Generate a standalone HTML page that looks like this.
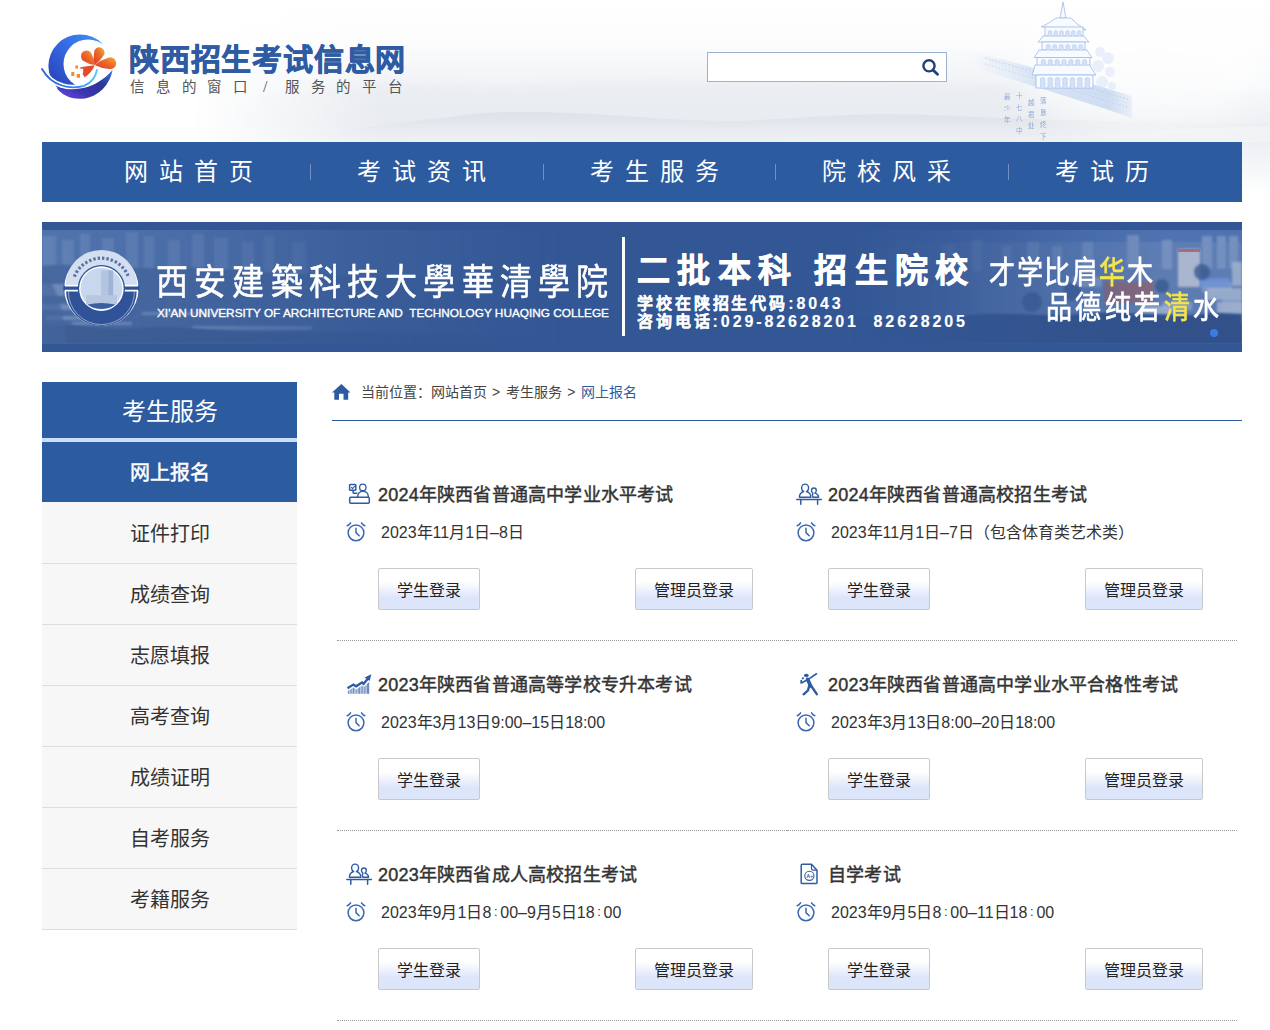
<!DOCTYPE html>
<html lang="zh-CN">
<head>
<meta charset="utf-8">
<title>陕西招生考试信息网</title>
<style>
*{margin:0;padding:0;box-sizing:border-box;}
html,body{width:1270px;height:1030px;overflow:hidden;background:#fff;}
body{font-family:"Liberation Sans",sans-serif;color:#333;position:relative;}
.abs{position:absolute;}
#header{position:absolute;left:0;top:0;width:1270px;height:142px;overflow:hidden;}
#nav{position:absolute;left:42px;top:142px;width:1200px;height:60px;background:#2d5b9f;}
#nav span{position:absolute;top:0;height:60px;line-height:60px;color:#fff;font-size:24px;letter-spacing:11px;white-space:nowrap;}
#nav i{position:absolute;top:22px;width:1px;height:16px;background:rgba(255,255,255,.33);}
#banner{position:absolute;left:42px;top:222px;width:1200px;height:130px;background:#335795;overflow:hidden;}
#side{position:absolute;left:42px;top:382px;width:255px;}
#side .hd{height:56px;background:#2d5b9f;color:#fff;font-size:24px;text-align:center;line-height:59px;}
#side .ln{height:4px;background:#c9def8;}
#side .it{height:61px;background:#f7f7f7;border-bottom:1px solid #dedede;text-align:center;line-height:62px;font-size:20px;color:#333;}
#side .it.on{height:61px;background:#2d5b9f;color:#fff;border-bottom:1px solid #f7f7f7;-webkit-text-stroke:0.5px #fff;line-height:62px;}
#crumb{position:absolute;left:332px;top:382px;width:910px;height:39px;border-bottom:1px solid #2d5b9f;}
#crumb .t{position:absolute;left:29px;top:0;font-size:14px;line-height:20px;color:#444;white-space:nowrap;}
.card{position:absolute;width:450px;height:191px;border-bottom:1px dotted #999;}
.card svg.ic,.card svg.ck{position:absolute;left:0;top:0;width:60px;height:100px;overflow:visible;}
.card .tt{position:absolute;left:41px;top:32px;font-size:18px;-webkit-text-stroke:0.45px #333;letter-spacing:0.2px;color:#333;white-space:nowrap;line-height:26px;}
.card .dt{position:absolute;left:44px;top:71px;font-size:16px;color:#333;white-space:nowrap;line-height:24px;}
.btn{position:absolute;top:118px;height:42px;border:1px solid #c9c9c9;border-radius:2px;background:linear-gradient(#fff 0%,#fff 32%,#dde5fa 72%,#dde5fa 100%);font-size:16px;color:#222;line-height:40px;padding-top:2px;text-align:center;white-space:nowrap;}
.b1{left:41px;width:102px;}
.b2{left:298px;width:118px;}
</style>
</head>
<body>
<div id="header">
<svg width="1270" height="142" style="position:absolute;left:0;top:0">
  <defs>
    <linearGradient id="hv" x1="0" y1="0" x2="0" y2="142" gradientUnits="userSpaceOnUse">
      <stop offset="0" stop-color="#ffffff"/>
      <stop offset="0.3" stop-color="#fcfcfd"/>
      <stop offset="0.55" stop-color="#f2f4f7"/>
      <stop offset="0.72" stop-color="#eef1f4"/>
      <stop offset="0.86" stop-color="#ebeef2"/>
      <stop offset="1" stop-color="#f1f3f5"/>
    </linearGradient>
    <linearGradient id="hm" x1="0" y1="0" x2="1270" y2="0" gradientUnits="userSpaceOnUse">
      <stop offset="0" stop-color="#000"/>
      <stop offset="0.15" stop-color="#000"/>
      <stop offset="0.3" stop-color="#fff"/>
      <stop offset="0.9" stop-color="#fff"/>
      <stop offset="1" stop-color="#ccc"/>
    </linearGradient>
    <mask id="hmask"><rect width="1270" height="142" fill="url(#hm)"/></mask>
    <filter id="bl3" x="-10%" y="-50%" width="120%" height="200%"><feGaussianBlur stdDeviation="3"/></filter>
    <filter id="bl1"><feGaussianBlur stdDeviation="0.6"/></filter>
    <linearGradient id="wallg" x1="975" y1="0" x2="1132" y2="0" gradientUnits="userSpaceOnUse"><stop offset="0" stop-color="#e4ecf8" stop-opacity="0.2"/><stop offset="0.4" stop-color="#c8d8f1"/><stop offset="0.85" stop-color="#bcd0ef"/><stop offset="1" stop-color="#bcd0ef" stop-opacity="0.3"/></linearGradient>
    <filter id="glow" x="-50%" y="-50%" width="200%" height="200%"><feGaussianBlur stdDeviation="18"/></filter>
    <filter id="bl05"><feGaussianBlur stdDeviation="0.35"/></filter>
    <linearGradient id="mt" x1="0" y1="0" x2="0" y2="1">
      <stop offset="0" stop-color="#dde2e9"/>
      <stop offset="0.5" stop-color="#e6e9ee"/>
      <stop offset="1" stop-color="#eef1f4" stop-opacity="0.3"/>
    </linearGradient>
  </defs>
  <g mask="url(#hmask)">
    <rect width="1270" height="142" fill="url(#hv)"/>
    <path d="M200 96 C280 88 380 80 460 84 C540 88 600 78 680 80 C760 82 800 74 880 80 C960 86 1060 80 1140 86 C1200 90 1240 88 1270 90 V142 H200 Z" fill="#e6e9ee" opacity="0.45" filter="url(#bl3)"/>
    <path d="M340 130 C380 126 420 120 450 117 C470 114 490 112 520 112 C560 112 600 114 640 117 C680 120 700 121 740 121 C780 119 810 117 850 115 C900 113 950 116 1000 118 C1060 120 1120 121 1180 123 C1220 124 1250 124 1270 123 V142 H340 Z" fill="url(#mt)" opacity="0.95" filter="url(#bl1)"/>
    <path d="M200 142 C300 140 380 138 430 136 C470 134 520 136 560 138 C640 140 700 140 780 137 C840 135 900 136 960 137 C1040 139 1150 130 1270 126 V142 Z" fill="#eef0f3" opacity="0.85" filter="url(#bl1)"/>
  </g>
  <!-- pagoda -->
  <ellipse cx="1150" cy="70" rx="130" ry="60" fill="#fff" opacity="0.75" filter="url(#glow)"/>
  <g filter="url(#bl05)">
    <path d="M975 52 C1020 64 1080 80 1132 96 L1132 118 C1080 100 1020 82 975 68 Z" fill="url(#wallg)" opacity="0.7"/>
    <path d="M985 58 C1030 70 1085 86 1130 100" stroke="#b2c7ea" stroke-width="1.2" fill="none" opacity="0.55" stroke-dasharray="2 1.5"/>
    <path d="M985 64 C1030 77 1085 94 1130 108" stroke="#b2c7ea" stroke-width="1.2" fill="none" opacity="0.5" stroke-dasharray="1.5 2"/>
    <path d="M990 61 C1035 74 1085 90 1130 104" stroke="#c4d4ef" stroke-width="2.5" fill="none" opacity="0.4" stroke-dasharray="1 1.5"/>
    <g fill="#dbe6f7" opacity="0.55">
      <circle cx="1100" cy="52" r="5"/><circle cx="1108" cy="58" r="6"/><circle cx="1098" cy="66" r="6"/><circle cx="1110" cy="72" r="5"/><circle cx="1102" cy="82" r="6"/><circle cx="1112" cy="86" r="4"/>
    </g>
    <g fill="#f7faff" stroke="#9dbbe8" stroke-width="0.8">
      <path d="M1063 2 L1066 18 L1060 18 Z"/>
      <path d="M1056 18 H1071 Q1076 24 1086 30 Q1064 27 1041 27 Q1050 23 1056 18 Z"/>
      <rect x="1045" y="27" width="38" height="9"/>
      <path d="M1043 36 H1084 Q1086 39 1089 42 H1038 Q1041 39 1043 36 Z"/>
      <rect x="1042" y="42" width="43" height="8"/>
      <path d="M1039 50 H1087 Q1089 54 1092 57.5 H1034 Q1037 54 1039 50 Z"/>
      <rect x="1037" y="57.5" width="53" height="8.5"/>
      <path d="M1035 65 H1090 Q1092 70 1096 75 H1032 Q1034 70 1035 65 Z"/>
      <rect x="1036" y="75" width="57" height="13"/>
    </g>
    <g fill="#d3e0f5" stroke="#b9cdef" stroke-width="0.6"><path d="M1048.2 36 V31.5 Q1049.9 29.5 1051.7 31.5 V36" /><path d="M1054.0 36 V31.5 Q1055.8 29.5 1057.5 31.5 V36" /><path d="M1059.8 36 V31.5 Q1061.6 29.5 1063.3 31.5 V36" /><path d="M1065.7 36 V31.5 Q1067.4 29.5 1069.2 31.5 V36" /><path d="M1071.5 36 V31.5 Q1073.2 29.5 1075.0 31.5 V36" /><path d="M1077.3 36 V31.5 Q1079.1 29.5 1080.8 31.5 V36" /><path d="M1046.3 50 V45.5 Q1048.2 43.5 1050.2 45.5 V50" /><path d="M1052.8 50 V45.5 Q1054.8 43.5 1056.7 45.5 V50" /><path d="M1059.3 50 V45.5 Q1061.2 43.5 1063.2 45.5 V50" /><path d="M1065.8 50 V45.5 Q1067.8 43.5 1069.7 45.5 V50" /><path d="M1072.3 50 V45.5 Q1074.2 43.5 1076.2 45.5 V50" /><path d="M1078.8 50 V45.5 Q1080.8 43.5 1082.7 45.5 V50" /><path d="M1041.4 66 V60.5 Q1043.4 58.5 1045.5 60.5 V66" /><path d="M1048.2 66 V60.5 Q1050.3 58.5 1052.3 60.5 V66" /><path d="M1055.1 66 V60.5 Q1057.1 58.5 1059.2 60.5 V66" /><path d="M1061.9 66 V60.5 Q1064.0 58.5 1066.1 60.5 V66" /><path d="M1068.8 66 V60.5 Q1070.9 58.5 1072.9 60.5 V66" /><path d="M1075.7 66 V60.5 Q1077.7 58.5 1079.8 60.5 V66" /><path d="M1082.5 66 V60.5 Q1084.6 58.5 1086.6 60.5 V66" /><path d="M1040.5 88 V78.5 Q1042.7 76.5 1044.9 78.5 V88" /><path d="M1047.9 88 V78.5 Q1050.1 76.5 1052.4 78.5 V88" /><path d="M1055.3 88 V78.5 Q1057.6 76.5 1059.8 78.5 V88" /><path d="M1062.8 88 V78.5 Q1065.0 76.5 1067.2 78.5 V88" /><path d="M1070.2 88 V78.5 Q1072.4 76.5 1074.7 78.5 V88" /><path d="M1077.6 88 V78.5 Q1079.9 76.5 1082.1 78.5 V88" /><path d="M1085.1 88 V78.5 Q1087.3 76.5 1089.5 78.5 V88" /></g>
  </g>
  <g fill="#7d9dd3" font-size="6.5" font-family="Liberation Serif" opacity="0.85"><text x="1004" y="99">最</text><text x="1004" y="110.5">少</text><text x="1004" y="122">年</text><text x="1016" y="98">十</text><text x="1016" y="109.5">七</text><text x="1016" y="121">八</text><text x="1016" y="132.5">中</text><text x="1028" y="105">越</text><text x="1028" y="116.5">君</text><text x="1028" y="128">处</text><text x="1040" y="103">落</text><text x="1040" y="115">恳</text><text x="1040" y="127">终</text><text x="1040" y="139">下</text></g>
  <!-- logo -->
  <defs>
    <linearGradient id="lg1" x1="0" y1="1" x2="1" y2="0">
      <stop offset="0" stop-color="#2536a8"/>
      <stop offset="0.5" stop-color="#3466e0"/>
      <stop offset="1" stop-color="#3f9cf7"/>
    </linearGradient>
    <linearGradient id="lg2" x1="0" y1="1" x2="1" y2="0">
      <stop offset="0" stop-color="#7a45ee"/>
      <stop offset="0.35" stop-color="#3a36b0"/>
      <stop offset="0.65" stop-color="#2a3594"/>
      <stop offset="1" stop-color="#3d78e8"/>
    </linearGradient>
    <linearGradient id="lg4" x1="0" y1="0" x2="1" y2="0">
      <stop offset="0" stop-color="#2d63d8"/>
      <stop offset="0.6" stop-color="#3585ee"/>
      <stop offset="1" stop-color="#5cc6f8"/>
    </linearGradient>
    <linearGradient id="lg3" x1="0" y1="1" x2="1" y2="0">
      <stop offset="0" stop-color="#e33524"/>
      <stop offset="0.55" stop-color="#ea6a2c"/>
      <stop offset="1" stop-color="#f2b13c"/>
    </linearGradient>
    <mask id="cres"><rect x="0" y="0" width="200" height="142" fill="#fff"/><circle cx="88" cy="64" r="24.5" fill="#000"/></mask>
  </defs>
  <circle cx="80" cy="66" r="31.6" fill="url(#lg1)" mask="url(#cres)"/>
  <path d="M42 69 C46 76 53 83 62 85.5 C68 87.5 76 88 84 85.8 C91 83 95.5 77.5 97 70" fill="none" stroke="#fff" stroke-width="5"/>
  <path d="M42 69 C46 76 53 83 62 85.5 C68 87.5 76 88 84 85.8 C91 83 95.5 77.5 97 70" fill="none" stroke="url(#lg4)" stroke-width="1.8" stroke-linecap="round"/>
  <path d="M56.5 88 C64 90.5 72 89.5 80 88.6 C92 87 104 80 112.6 70 C110 84 99 97.5 82 98.8 C70 99.5 61 94 56.5 88 Z" fill="url(#lg2)"/>
  <g fill="url(#lg3)">
    <path d="M94.6 65.0 Q94.7 59.6 92.0 54.8 A5.6 5.6 0 1 0 84.7 61.5 Q89.2 64.6 94.6 65.0 Z"/>
    <path d="M94.6 65.0 Q99.8 61.6 103.1 56.3 A5.3 5.3 0 1 0 94.0 52.9 Q93.0 59.0 94.6 65.0 Z"/>
    <path d="M94.6 65.0 Q101.3 68.4 108.7 68.9 A5.9 5.9 0 1 0 107.5 58.0 Q100.3 60.2 94.6 65.0 Z"/>
    <path d="M94.6 65.2 C90 65.8 84 66.5 80 67.5 L81.5 72 L84.6 77.2 C89 74.5 93 70 94.6 65.2 Z" fill="#e54a2c"/>
  </g>
  <g fill="#ef8a2e">
    <rect x="75.4" y="65.4" width="2.6" height="3.2"/>
    <rect x="79" y="68.7" width="4.2" height="4.6" fill="#fff"/>
    <rect x="71.3" y="72" width="3" height="4"/>
    <rect x="76.7" y="74" width="3.3" height="3.8"/>
  </g>
</svg>
  <div class="abs" style="left:129px;top:42px;font-size:30px;font-weight:bold;color:#2e5ba2;white-space:nowrap;line-height:36px;letter-spacing:0.8px;-webkit-text-stroke:0.7px #2e5ba2;">陕西招生考试信息网</div>
  <div class="abs" style="left:130px;top:77px;font-size:14.5px;color:#555;white-space:nowrap;line-height:20px;font-family:'Liberation Serif',serif;"><span style="display:inline-block;width:25.8px">信</span><span style="display:inline-block;width:25.8px">息</span><span style="display:inline-block;width:25.8px">的</span><span style="display:inline-block;width:25.8px">窗</span><span style="display:inline-block;width:25.8px">口</span><span style="display:inline-block;width:25.8px;padding-left:4px;font-size:16px">/</span><span style="display:inline-block;width:25.8px">服</span><span style="display:inline-block;width:25.8px">务</span><span style="display:inline-block;width:25.8px">的</span><span style="display:inline-block;width:25.8px">平</span><span style="display:inline-block;width:25.8px">台</span></div>
  <div class="abs" style="left:707px;top:52px;width:240px;height:30px;border:1px solid #9bb0d3;background:#fff;"></div>
  <svg class="abs" style="left:918px;top:56px" width="22" height="22" viewBox="0 0 22 22"><circle cx="11" cy="9.8" r="5.6" fill="none" stroke="#1f3f7c" stroke-width="2.4"/><path d="M15 14 L19.5 18.3" stroke="#1f3f7c" stroke-width="2.8" stroke-linecap="round"/></svg>
</div>

<div class="abs" style="left:1242px;top:142px;width:28px;height:54px;background:linear-gradient(#edf0f3,#f4f6f8 45%,#fff)"></div>
<div id="nav">
  <span style="left:82px">网站首页</span><i style="left:268px"></i>
  <span style="left:315px">考试资讯</span><i style="left:501px"></i>
  <span style="left:548px">考生服务</span><i style="left:733px"></i>
  <span style="left:780px">院校风采</span><i style="left:966px"></i>
  <span style="left:1013px">考试历</span>
</div>

<div id="banner">
<svg width="1200" height="130" style="position:absolute;left:0;top:0">
  <defs>
    <linearGradient id="bl" x1="0" y1="0" x2="1" y2="0">
      <stop offset="0" stop-color="#6d8fc0" stop-opacity="0.75"/>
      <stop offset="0.45" stop-color="#5a7db5" stop-opacity="0.45"/>
      <stop offset="1" stop-color="#335795" stop-opacity="0"/>
    </linearGradient>
    <linearGradient id="br" x1="0" y1="0" x2="1" y2="0">
      <stop offset="0" stop-color="#335795" stop-opacity="0"/>
      <stop offset="0.45" stop-color="#4a6aa5" stop-opacity="0.5"/>
      <stop offset="1" stop-color="#5678b0" stop-opacity="0.9"/>
    </linearGradient>
    <linearGradient id="brv" x1="0" y1="0" x2="0" y2="1">
      <stop offset="0" stop-color="#7d9ccc"/>
      <stop offset="0.35" stop-color="#8aa5cf"/>
      <stop offset="0.6" stop-color="#52709f"/>
      <stop offset="1" stop-color="#2b4d80"/>
    </linearGradient>
    <mask id="mr"><rect x="800" y="8" width="400" height="114" fill="url(#mrg)"/></mask>
    <linearGradient id="mrg" x1="800" y1="0" x2="1200" y2="0" gradientUnits="userSpaceOnUse">
      <stop offset="0" stop-color="#000"/>
      <stop offset="0.25" stop-color="#333"/>
      <stop offset="0.6" stop-color="#bbb"/>
      <stop offset="0.8" stop-color="#fff"/>
      <stop offset="1" stop-color="#fff"/>
    </linearGradient>
    <mask id="ml"><rect x="0" y="8" width="520" height="114" fill="url(#mlg)"/></mask>
    <linearGradient id="mlg" x1="0" y1="0" x2="520" y2="0" gradientUnits="userSpaceOnUse">
      <stop offset="0" stop-color="#d0d0d0"/>
      <stop offset="0.3" stop-color="#9a9a9a"/>
      <stop offset="0.6" stop-color="#444"/>
      <stop offset="1" stop-color="#000"/>
    </linearGradient>
    <filter id="bb"><feGaussianBlur stdDeviation="1.2"/></filter>
  </defs>
  <rect width="1200" height="130" fill="#335795"/>
  <!-- left photo -->
  <g mask="url(#ml)">
    <rect x="0" y="8" width="520" height="114" fill="#587ab2"/>
    <g fill="#6c8bbd" filter="url(#bb)">
      <rect x="0" y="14" width="14" height="40"/><rect x="20" y="18" width="12" height="36"/><rect x="38" y="12" width="10" height="42"/>
      <rect x="60" y="16" width="12" height="40"/><rect x="84" y="10" width="12" height="44"/><rect x="102" y="14" width="10" height="40"/>
      <rect x="126" y="18" width="12" height="36"/><rect x="150" y="12" width="12" height="44"/><rect x="172" y="16" width="14" height="40"/>
      <rect x="200" y="20" width="12" height="34"/><rect x="222" y="14" width="10" height="40"/><rect x="250" y="20" width="14" height="36"/>
    </g>
    <path d="M0 44 C40 40 80 48 120 46 C160 44 200 50 260 52 C320 54 380 58 520 60 V122 H0 Z" fill="#4d6da3" filter="url(#bb)"/>
    <g fill="#8ea6cc" opacity="0.75" filter="url(#bb)">
      <rect x="0" y="62" width="22" height="12"/><rect x="0" y="82" width="30" height="6"/><rect x="4" y="94" width="40" height="4"/>
      <rect x="30" y="100" width="60" height="3"/><rect x="100" y="90" width="90" height="3"/><rect x="150" y="104" width="120" height="4"/>
    </g>
    <path d="M0 104 C30 100 60 110 100 106 C140 102 180 112 240 110 C300 108 380 114 520 112 V122 H0 Z" fill="#3f5e93" filter="url(#bb)"/>
    <path d="M0 48 C10 60 20 72 24 122 H0 Z" fill="#4a6aa0" opacity="0.7" filter="url(#bb)"/>
  </g>
  <!-- right photo -->
  <g mask="url(#mr)">
    <rect x="800" y="8" width="400" height="114" fill="#4f73b0"/>
    <rect x="800" y="20" width="400" height="34" fill="#5f7db5" filter="url(#bb)"/>
    <g fill="#7590bf" filter="url(#bb)">
      <rect x="900" y="22" width="12" height="30"/><rect x="930" y="18" width="10" height="34"/>
      <rect x="960" y="24" width="9" height="28"/><rect x="985" y="20" width="12" height="34"/>
      <rect x="1010" y="24" width="10" height="30"/><rect x="1040" y="20" width="11" height="34"/>
      <rect x="1085" y="13" width="12" height="40"/><rect x="1120" y="18" width="10" height="30"/>
      <rect x="1160" y="14" width="10" height="46"/><rect x="1175" y="14" width="9" height="46"/>
      <rect x="1187" y="14" width="9" height="46"/>
    </g>
    <path d="M800 52 C860 46 920 52 980 48 C1040 44 1100 50 1200 46 V96 H800 Z" fill="#5d7bb2" filter="url(#bb)"/>
    <g fill="#8aa0c8" opacity="0.8" filter="url(#bb)">
      <rect x="1030" y="55" width="30" height="10"/><rect x="1160" y="60" width="30" height="10"/>
      <rect x="1180" y="76" width="20" height="26"/><rect x="1120" y="80" width="30" height="8"/>
    </g>
    <rect x="1136" y="27" width="22" height="38" fill="#aab6cf" filter="url(#bb)"/>
    <rect x="1136" y="27" width="22" height="3" fill="#a66a78"/>
    <rect x="1062" y="60" width="50" height="21" fill="#86697c" filter="url(#bb)"/>
    <rect x="1158" y="56" width="30" height="10" fill="#6e93d6" opacity="0.8" filter="url(#bb)"/>
    <g fill="#9fb1d0" opacity="0.85" filter="url(#bb)">
      <rect x="1165" y="66" width="35" height="12"/><rect x="1175" y="80" width="25" height="22"/><rect x="1100" y="84" width="30" height="8"/>
      <rect x="1190" y="40" width="10" height="24"/>
    </g>
    <g fill="#3a5a90" opacity="0.8" filter="url(#bb)">
      <circle cx="1160" cy="50" r="8"/><circle cx="1120" cy="64" r="7"/><circle cx="1030" cy="70" r="9"/><circle cx="990" cy="80" r="10"/>
    </g>
    <path d="M800 98 C840 92 880 100 920 94 C960 88 1000 96 1040 92 C1080 88 1120 96 1160 92 C1180 90 1190 92 1200 92 V122 H800 Z" fill="#30518a" filter="url(#bb)"/>
  </g>
  <rect x="0" y="0" width="1200" height="8" fill="#335795"/>
  <rect x="0" y="122" width="1200" height="8" fill="#335795"/>
  <!-- school logo -->
  <g transform="translate(59.4,66.6)">
    <circle r="37.2" fill="#ffffff"/>
    <path d="M-35.7 -3 A35.7 35.7 0 0 1 35.7 -3 Z" fill="#d3deef"/>
    <path d="M-35.4 2 A35.4 35.4 0 0 0 35.4 2 Z" fill="#2f5299"/>
    <rect x="-38" y="-3" width="76" height="5" fill="#2f5299"/>
    <path d="M-36.5 -3 H-22 M22 -3 H36.5" stroke="#fff" stroke-width="1.6"/>
    <path d="M-36.5 2 H-22 M22 2 H36.5" stroke="#fff" stroke-width="1.6"/>
    <path d="M-33 3 A33 33 0 0 0 33 3" fill="none" stroke="#fff" stroke-width="0.6" opacity="0.8"/>
    <circle r="23.6" fill="#2f5299"/>
    <circle r="22.3" fill="#ffffff"/>
    <circle r="20.9" fill="#c9d7ee"/>
    <rect x="-0.3" y="-18.2" width="12" height="34" fill="#b3c4e0"/>
    <rect x="7" y="-18" width="4.7" height="34" fill="#9fb3d6"/>
    <rect x="-15.4" y="6.6" width="31" height="9" fill="#b7c7e2"/>
    <path d="M-14 16 Q0 13 14 16 Q9 20 0 20.5 Q-9 20 -14 16 Z" fill="#3a5ea3"/>
    <path d="M-27 -12 A29 29 0 0 1 27 -12" fill="none" stroke="#2d4f8f" stroke-width="3.2" stroke-dasharray="2.4 2" opacity="0.75"/>
  </g>
</svg>
  <div class="abs" style="left:114px;top:36px;font-size:32px;color:#fff;white-space:nowrap;line-height:44px;letter-spacing:6.2px;-webkit-text-stroke:0.5px #fff;transform:scaleY(1.12);transform-origin:0 0;">西安建築科技大學華清學院</div>
  <div class="abs" id="eng" style="left:115px;top:84px;font-size:11.8px;color:#fff;-webkit-text-stroke:0.35px #fff;white-space:nowrap;line-height:14px;">XI'AN UNIVERSITY OF ARCHITECTURE AND&nbsp; TECHNOLOGY HUAQING COLLEGE</div>
  <div class="abs" style="left:580px;top:15px;width:3px;height:99px;background:#fff;"></div>
  <div class="abs" style="left:595px;top:29px;font-size:33px;font-weight:bold;color:#fff;white-space:nowrap;line-height:40px;letter-spacing:7.3px;-webkit-text-stroke:0.7px #fff;">二批本科<span style="display:inline-block;width:16px"></span>招生院校</div>
  <div class="abs" style="left:595px;top:72px;font-size:16px;font-weight:bold;color:#fff;white-space:nowrap;line-height:20px;letter-spacing:2.9px;-webkit-text-stroke:0.15px #fff;">学校在陕招生代码:8043</div>
  <div class="abs" style="left:595px;top:90px;font-size:16px;font-weight:bold;color:#fff;white-space:nowrap;line-height:20px;letter-spacing:2.9px;-webkit-text-stroke:0.15px #fff;">咨询电话:029-82628201&nbsp;&nbsp;82628205</div>
  <div class="abs" style="left:947px;top:30px;font-size:26px;color:#fff;white-space:nowrap;line-height:34px;letter-spacing:1.6px;-webkit-text-stroke:0.6px #fff;transform:scaleY(1.2);transform-origin:0 0;">才学比肩<span style="color:#f3e54a;-webkit-text-stroke-color:#f3e54a">华</span>木</div>
  <div class="abs" style="left:1004px;top:65px;font-size:26px;color:#fff;white-space:nowrap;line-height:34px;letter-spacing:3.4px;-webkit-text-stroke:0.6px #fff;transform:scaleY(1.2);transform-origin:0 0;">品德纯若<span style="color:#f3e54a;-webkit-text-stroke-color:#f3e54a">清</span>水</div>
  <div class="abs" style="left:1168px;top:107px;width:8px;height:8px;border-radius:50%;background:#3b7be6;"></div>
</div>

<div id="side">
  <div class="hd">考生服务</div>
  <div class="ln"></div>
  <div class="it on">网上报名</div>
  <div class="it">证件打印</div>
  <div class="it">成绩查询</div>
  <div class="it">志愿填报</div>
  <div class="it">高考查询</div>
  <div class="it">成绩证明</div>
  <div class="it">自考服务</div>
  <div class="it">考籍服务</div>
</div>

<div id="crumb">
  <svg class="abs" style="left:0;top:1px" width="19" height="18" viewBox="0 0 19 18"><path d="M9.4 0.9 L0 9.5 H2.3 V16.7 H7 V10.8 H11.5 V16.7 H16.2 V9.5 H18.5 Z" fill="#2d5b9f"/></svg>
  <div class="t">当前位置：网站首页<span style="margin:0 6px 0 5px">&gt;</span>考生服务<span style="margin:0 6px 0 5px">&gt;</span><span style="color:#2d5b9f">网上报名</span></div>
</div>

<svg width="0" height="0" style="position:absolute">
<defs>
<g id="clk" fill="none" stroke="#3b68b0" stroke-width="1.5" stroke-linecap="round" stroke-linejoin="round">
  <circle cx="19" cy="82.8" r="7.9"/>
  <path d="M19 78.2 V82.6 L22.2 85.8"/>
  <path d="M10.2 75.8 Q12.3 74.8 13.6 72.8"/>
  <path d="M27.8 75.8 Q25.7 74.8 24.5 72.8"/>
</g>
<g id="i1" fill="none" stroke="#2d5ba4" stroke-width="1.5" stroke-linejoin="round">
  <rect x="12.7" y="47.2" width="19.6" height="6" rx="1"/>
  <rect x="12.6" y="34.4" width="6.2" height="5.9" rx="0.8"/>
  <path d="M14.2 37.2 L15.6 38.7 L17.8 36" stroke-width="1.1"/>
  <path d="M16.1 40.4 V42.6 Q16.1 43.3 16.8 43.3 H20.3"/>
  <circle cx="25.8" cy="37.4" r="3.2" stroke-width="1.3"/>
  <path d="M20.6 47 C20.6 43.6 23 41.3 26 41.3 C29 41.3 31.4 43.6 31.4 47"/>
</g>
<g id="i2" fill="none" stroke="#2d5ba4" stroke-width="1.4" stroke-linecap="round" stroke-linejoin="round">
  <path d="M9.8 49.6 H34.4" stroke-width="1.5"/>
  <path d="M13.8 49.6 V54.2 M30.6 49.6 V54.2" stroke-width="1.5"/>
  <path d="M16.7 41.6 C15.3 40.8 14.6 39.4 14.6 37.9 C14.6 35.8 16.2 34.1 18.1 34.1 C20 34.1 21.6 35.8 21.6 37.9 C21.6 39.4 20.9 40.8 19.5 41.6 C22 42.2 23.8 44.5 23.9 47.3 H12.4 C12.4 44.5 14.2 42.2 16.7 41.6 Z"/>
  <path d="M25.9 43.1 C25 42.6 24.5 41.7 24.5 40.6 C24.5 39.2 25.6 38 26.9 38 C28.2 38 29.3 39.2 29.3 40.6 C29.3 41.7 28.8 42.6 27.9 43.1 C30 43.8 31.6 45.2 31.6 47.3 H25.9 C25.3 46.2 25.3 44.3 25.9 43.1 Z"/>
</g>
<g id="i3">
  <clipPath id="chc"><polygon points="10.5,53.7 10.5,51.3 16.5,47.6 19.2,49.5 25.2,45.6 27,47 32.4,41.8 32.4,53.7"/></clipPath>
  <g clip-path="url(#chc)" fill="#2d5ba4">
    <rect x="10.5" y="40" width="22" height="14" opacity="0.35"/>
    <rect x="11" y="40" width="1" height="14" opacity="0.5"/><rect x="13.5" y="40" width="1.2" height="14" opacity="0.4"/>
    <rect x="16" y="40" width="1.2" height="14" opacity="0.5"/><rect x="19" y="40" width="1" height="14" opacity="0.3"/>
    <rect x="21.5" y="40" width="1.5" height="14" opacity="0.5"/><rect x="24.5" y="40" width="1.2" height="14" opacity="0.45"/>
    <rect x="27" y="40" width="1.5" height="14" opacity="0.35"/><rect x="30" y="40" width="2.4" height="14" opacity="0.55"/>
  </g>
  <path d="M10.5 48.2 L16.4 44.5 L19.1 46.3 L25 42.5 L26.6 43.8 L30.8 38.8" fill="none" stroke="#2d5ba4" stroke-width="2.3" stroke-linejoin="miter"/>
  <polygon points="27.6,37.4 34.4,34.2 32.6,41" fill="#2d5ba4"/>
</g>
<g id="i4" fill="#2d5ba4" stroke="#2d5ba4" stroke-linecap="round" stroke-linejoin="round">
  <ellipse cx="19.3" cy="35.4" rx="2.4" ry="1.7" stroke="none"/>
  <circle cx="15.9" cy="38.3" r="1.1" stroke="none"/>
  <path d="M14.2 40.6 V43 L22 38.9 L29.4 33.8" fill="none" stroke-width="1.7"/>
  <path d="M20.6 39.3 L23.5 45.8" fill="none" stroke-width="3.7"/>
  <path d="M22.4 45 L21 50.4 L16.6 54.3" fill="none" stroke-width="2.4"/>
  <path d="M23.6 45 L29.8 54.2" fill="none" stroke-width="2.4"/>
</g>
<g id="i5" fill="none" stroke="#2d5ba4" stroke-width="1.5" stroke-linejoin="round">
  <path d="M14.2 35.3 Q14.2 34.2 15.3 34.2 H24.5 L30 40.2 V52.4 Q30 53.5 28.9 53.5 H15.3 Q14.2 53.5 14.2 52.4 Z"/>
  <path d="M24.5 34.4 V38.3 Q24.5 40.2 26.4 40.2 H29.8" stroke-width="1.2"/>
  <circle cx="22.4" cy="45.8" r="4.6" stroke-width="1.1"/>
  <text x="19.6" y="47.6" font-size="5" font-weight="bold" fill="#2d5ba4" stroke="none" font-family="Liberation Sans">A+</text>
</g>
</defs>
</svg>
<div id="cards">
<div class="card" style="left:337px;top:450px">
  <svg class="ic"><use href="#i1"/></svg>
  <div class="tt">2024年陕西省普通高中学业水平考试</div>
  <svg class="ck"><use href="#clk"/></svg>
  <div class="dt">2023年11月1日–8日</div>
  <div class="btn b1">学生登录</div>
  <div class="btn b2">管理员登录</div>
</div>
<div class="card" style="left:787px;top:450px">
  <svg class="ic"><use href="#i2"/></svg>
  <div class="tt">2024年陕西省普通高校招生考试</div>
  <svg class="ck"><use href="#clk"/></svg>
  <div class="dt">2023年11月1日–7日（包含体育类艺术类）</div>
  <div class="btn b1">学生登录</div>
  <div class="btn b2">管理员登录</div>
</div>
<div class="card" style="left:337px;top:640px">
  <svg class="ic"><use href="#i3"/></svg>
  <div class="tt">2023年陕西省普通高等学校专升本考试</div>
  <svg class="ck"><use href="#clk"/></svg>
  <div class="dt">2023年3月13日9:00–15日18:00</div>
  <div class="btn b1">学生登录</div>
</div>
<div class="card" style="left:787px;top:640px">
  <svg class="ic"><use href="#i4"/></svg>
  <div class="tt">2023年陕西省普通高中学业水平合格性考试</div>
  <svg class="ck"><use href="#clk"/></svg>
  <div class="dt">2023年3月13日8:00–20日18:00</div>
  <div class="btn b1">学生登录</div>
  <div class="btn b2">管理员登录</div>
</div>
<div class="card" style="left:337px;top:830px">
  <svg class="ic"><use href="#i2"/></svg>
  <div class="tt">2023年陕西省成人高校招生考试</div>
  <svg class="ck"><use href="#clk"/></svg>
  <div class="dt">2023年9月1日8<span style="display:inline-block;width:9px;text-align:center;position:relative;top:-2px;font-size:13px">:</span>00–9月5日18<span style="display:inline-block;width:9px;text-align:center;position:relative;top:-2px;font-size:13px">:</span>00</div>
  <div class="btn b1">学生登录</div>
  <div class="btn b2">管理员登录</div>
</div>
<div class="card" style="left:787px;top:830px">
  <svg class="ic"><use href="#i5"/></svg>
  <div class="tt">自学考试</div>
  <svg class="ck"><use href="#clk"/></svg>
  <div class="dt">2023年9月5日8<span style="display:inline-block;width:9px;text-align:center;position:relative;top:-2px;font-size:13px">:</span>00–11日18<span style="display:inline-block;width:9px;text-align:center;position:relative;top:-2px;font-size:13px">:</span>00</div>
  <div class="btn b1">学生登录</div>
  <div class="btn b2">管理员登录</div>
</div>
</div>
</body>
</html>
